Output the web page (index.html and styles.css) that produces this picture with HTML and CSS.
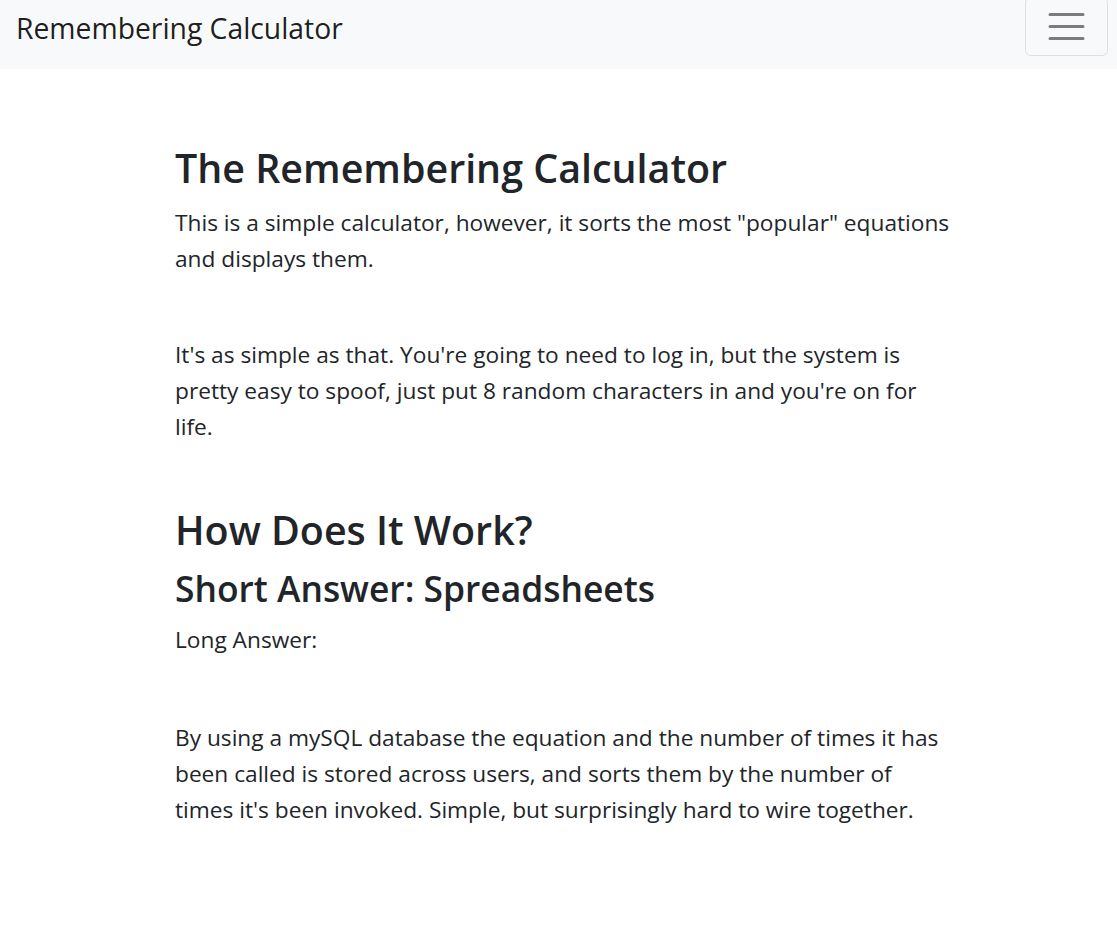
FILE: index.html
```html
<!DOCTYPE html>
<html lang="en">
<head>
<meta charset="utf-8">
<title>Remembering Calculator</title>
<link rel="stylesheet" href="styles.css">
</head>
<body>
<nav class="navbar">
  <span class="brand">Remembering Calculator</span>
  <button class="toggler" type="button" aria-label="Toggle navigation">
    <svg class="toggler-icon" viewBox="0 0 30 30" width="45" height="45">
      <path stroke="rgba(0,0,0,0.5)" stroke-linecap="round" stroke-miterlimit="10" stroke-width="2" d="M4 7h22M4 15h22M4 23h22"/>
    </svg>
  </button>
</nav>
<main class="container">
  <h3 class="h3">The Remembering Calculator</h3>
  <p class="text">This is a simple calculator, however, it sorts the most "popular" equations<br>and displays them.</p>
  <div class="spacer"></div>
  <p class="text">It's as simple as that. You're going to need to log in, but the system is<br>pretty easy to spoof, just put 8 random characters in and you're on for<br>life.</p>
  <div class="spacer"></div>
  <h3 class="h3">How Does It Work?</h3>
  <h4 class="h4">Short Answer: Spreadsheets</h4>
  <p class="text">Long Answer:</p>
  <div class="spacer"></div>
  <p class="text last">By using a mySQL database the equation and the number of times it has<br>been called is stored across users, and sorts them by the number of<br>times it's been invoked. Simple, but surprisingly hard to wire together.</p>
</main>
</body>
</html>
```
FILE: styles.css
```css
html, body {
  margin: 0;
  padding: 0;
  background: #fff;
}
body {
  font-family: "Open Sans", "Noto Sans", "Liberation Sans", sans-serif;
  color: #212529;
  font-size: 22.7px;
  line-height: 36px;
}
.navbar {
  height: 69px;
  box-sizing: border-box;
  background: #f8f9fa;
  display: flex;
  align-items: flex-start;
  justify-content: space-between;
  padding: 0 9px 0 16px;
}
.brand {
  font-size: 28.3px;
  line-height: 45px;
  margin-top: 6px;
  color: rgba(0,0,0,0.9);
}
.toggler {
  margin-top: -3px;
  width: 83px;
  height: 59px;
  box-sizing: border-box;
  border: 1.5px solid rgba(0,0,0,0.1);
  border-radius: 6px;
  background: transparent;
  padding: 6px 18px;
  display: flex;
  align-items: center;
  justify-content: center;
}
.toggler-icon {
  display: block;
  width: 45px;
  height: 45px;
}
.container {
  margin: 0 0 0 175px;
  padding: 74px 0 60px;
}
.h3 {
  font-size: 39.4px;
  font-weight: 600;
  line-height: 50px;
  margin: 0 0 12px;
}
.h4 {
  font-size: 35.4px;
  font-weight: 600;
  line-height: 43px;
  margin: 0 0 12px;
}
.text {
  margin: 0 0 24px;
  white-space: nowrap;
}
.text.last {
  margin-top: 2px;
}
.spacer {
  height: 36px;
}
```
